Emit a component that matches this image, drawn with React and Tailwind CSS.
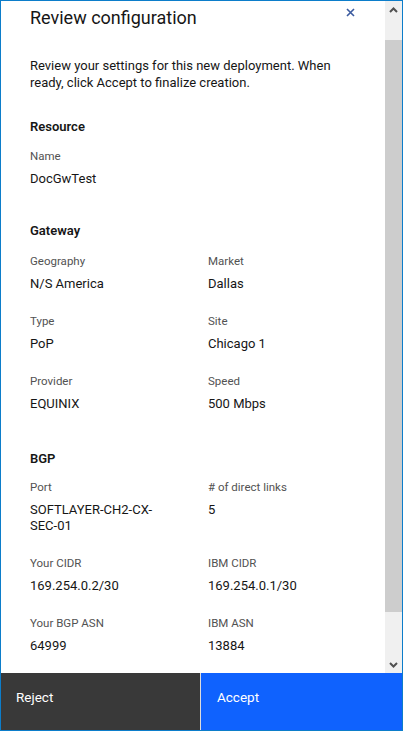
import React from 'react';

const Field = ({ label, value }) => (
  <div className="min-w-0">
    <div className="text-[11.5px] leading-[16px] text-[#525252]">{label}</div>
    <div className="mt-[7px] pr-[30px] text-[13px] leading-[16px] text-[#161616]">{value}</div>
  </div>
);

const Section = ({ title, children, className, gridClass }) => (
  <section className={className}>
    <h3 className="text-[13px] font-semibold leading-[18px] text-[#161616]">{title}</h3>
    <div className={`grid grid-cols-[178px_1fr] gap-y-[21px] ${gridClass}`}>{children}</div>
  </section>
);

const App = () => {
  return (
    <div
      className="flex h-[731px] w-[403px] flex-col overflow-hidden border border-[#0c7dca] bg-white"
      style={{ fontFamily: 'Roboto, "Noto Sans", sans-serif' }}
    >
      <div className="flex min-h-0 flex-1">
        <div className="min-w-0 flex-1 overflow-hidden pl-[29px]">
          <div className="flex items-start justify-between pr-[30px] pt-[4px]">
            <h2 className="text-[18px] leading-[26px] text-[#161616]">Review configuration</h2>
            <svg width="9" height="9" viewBox="0 0 9 9" className="mt-[3px] text-[#3b5a9f]">
              <path d="M1 1L8 8M8 1L1 8" stroke="currentColor" strokeWidth="1.6" />
            </svg>
          </div>

          <p className="mt-[26px] pr-[30px] text-[13px] leading-[17px] text-[#161616]">
            Review your settings for this new deployment. When ready, click Accept to finalize creation.
          </p>

          <Section title="Resource" className="mt-[27px]" gridClass="mt-[12px]">
            <Field label="Name" value="DocGwTest" />
          </Section>

          <Section title="Gateway" className="mt-[35px]" gridClass="mt-[13px]">
            <Field label="Geography" value="N/S America" />
            <Field label="Market" value="Dallas" />
            <Field label="Type" value="PoP" />
            <Field label="Site" value="Chicago 1" />
            <Field label="Provider" value="EQUINIX" />
            <Field label="Speed" value="500 Mbps" />
          </Section>

          <Section title="BGP" className="mt-[38px]" gridClass="mt-[11px]">
            <Field label="Port" value="SOFTLAYER-CH2-CX-SEC-01" />
            <Field label="# of direct links" value="5" />
            <Field label="Your CIDR" value="169.254.0.2/30" />
            <Field label="IBM CIDR" value="169.254.0.1/30" />
            <Field label="Your BGP ASN" value="64999" />
            <Field label="IBM ASN" value="13884" />
          </Section>
        </div>

        {/* scrollbar */}
        <div className="flex w-[17px] flex-col bg-[#f0f0f0]">
          <div className="flex h-[17px] items-center justify-center">
            <svg width="9" height="6" viewBox="0 0 9 6">
              <path d="M1 5L4.5 1.5L8 5" stroke="#505050" strokeWidth="2" fill="none" />
            </svg>
          </div>
          <div className="mt-[22px] h-[572px] bg-[#cdcdcd]" />
          <div className="flex-1" />
          <div className="flex h-[17px] items-center justify-center">
            <svg width="9" height="6" viewBox="0 0 9 6">
              <path d="M1 1L4.5 4.5L8 1" stroke="#505050" strokeWidth="2" fill="none" />
            </svg>
          </div>
        </div>
      </div>

      <div className="flex h-[57px] text-[13.5px] leading-[18px] text-white">
        <div className="w-[199px] bg-[#393939] pl-[15px] pt-[15px]">Reject</div>
        <div className="w-px bg-[#dcdcdc]" />
        <div className="flex-1 bg-[#0f62fe] pl-[16px] pt-[15px]">Accept</div>
      </div>
    </div>
  );
};

export default App;
